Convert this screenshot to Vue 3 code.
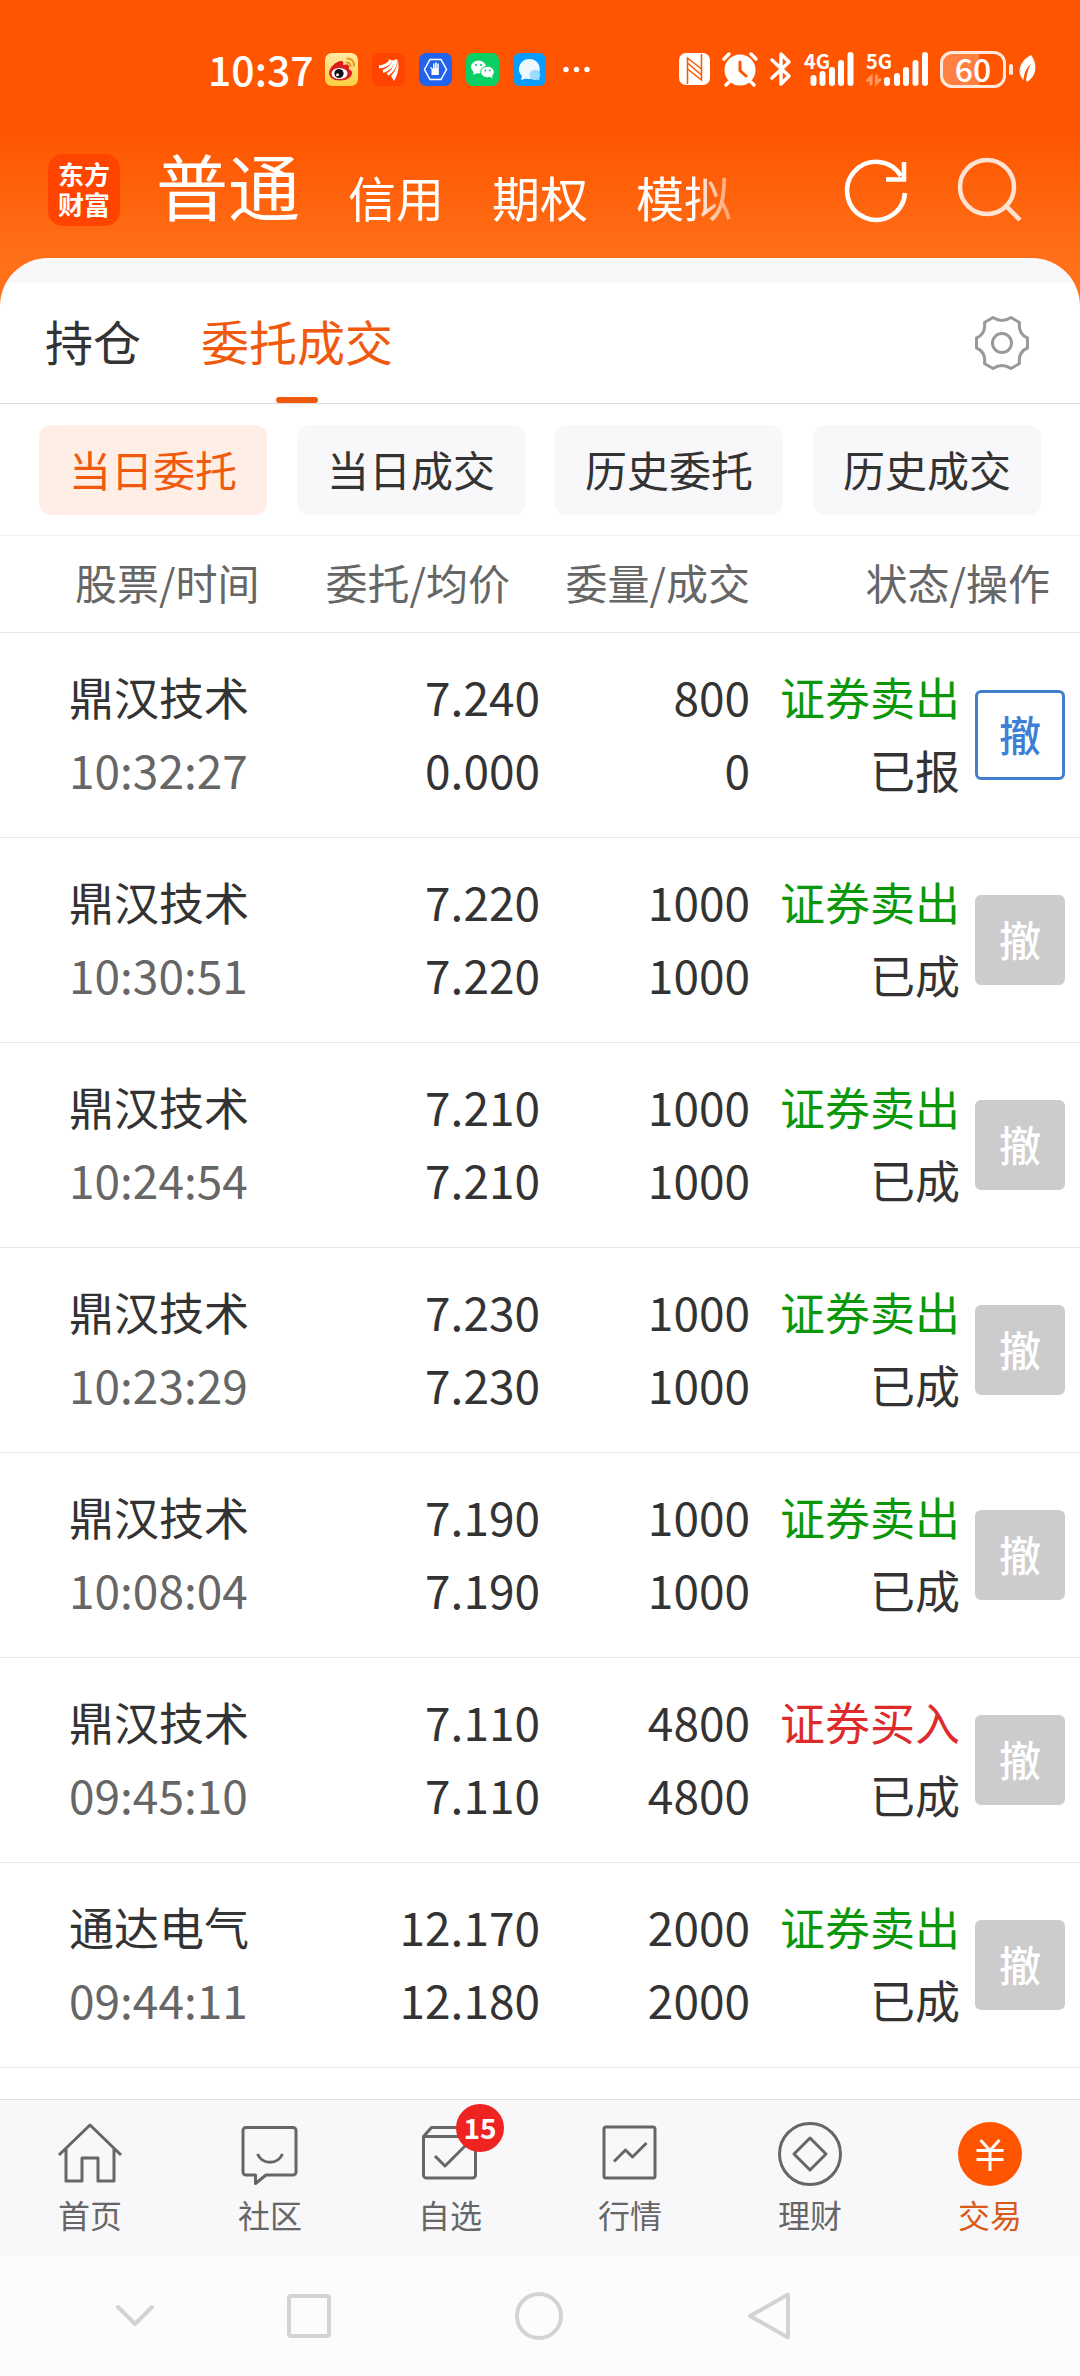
<template>
  <div class="app">
    <header class="header">
      <!-- 系统状态栏 -->
      <div class="status-bar">
        <span class="clock">10:37</span>
        <div class="notices">
          <svg viewBox="0 0 33 33" class="notice">
            <defs>
              <linearGradient id="weiboBg" x1="0" y1="0" x2="0" y2="1">
                <stop offset="0" stop-color="#ffe9a8" />
                <stop offset="1" stop-color="#ffcf3d" />
              </linearGradient>
            </defs>
            <rect width="33" height="33" rx="7" fill="url(#weiboBg)" />
            <path
              d="M4 20c0-5 7-12 12-12 2 0 3 1 2 4 3-1 6-1 6 1.500 0 1-.5 2 .5 3 2 1 2.500 2 2.500 3.500 0 4-5 7.500-12 7.500S4 24 4 20z"
              fill="#d81e1e" />
            <ellipse cx="14.500" cy="20.500" rx="8" ry="5.500" fill="#fff" />
            <circle cx="14" cy="20.500" r="4.600" fill="#111" />
            <circle cx="12.500" cy="21.800" r="1.500" fill="#fff" />
            <path d="M21 9.500c3-.5 5 1.500 4.500 4.500M21.500 5.500c5-.5 8 3 7.500 8" fill="none" stroke="#e89a1c" stroke-width="2" />
          </svg>
          <svg viewBox="0 0 33 33" class="notice">
            <rect width="33" height="33" rx="7" fill="#ff4300" />
            <g fill="none" stroke="#fff" stroke-width="3">
              <path d="M7 14c6-.5 10-3 12-7" />
              <path d="M11 18.500c6-2 9-5 11-11" />
              <path d="M15.500 21.500c5-3 8-8 8.500-15" />
            </g>
            <path d="M26 7c1.500 9-.5 15-4 21l-3-5c4-4 6-9 7-16z" fill="#fff" />
          </svg>
          <svg viewBox="0 0 33 33" class="notice">
            <rect width="33" height="33" rx="7" fill="#2263ee" />
            <path d="M11 6.500h11l5.500 10-5.500 10H11l-5.500-10z" fill="none" stroke="#fff" stroke-width="1.500" />
            <path
              d="M12.500 22V16.500l-1.500-2 1-.5 2 2v-5.500h1.500V15h.6v-5.500h1.600V15h.6v-4.500h1.500V22z"
              fill="#fff" />
          </svg>
          <svg viewBox="0 0 33 33" class="notice">
            <rect width="33" height="33" rx="7" fill="#09cf64" />
            <ellipse cx="12.500" cy="14" rx="7.500" ry="6.500" fill="#fff" />
            <path d="M8 18l-1 4 4-2z" fill="#fff" />
            <ellipse cx="21.500" cy="19" rx="6.800" ry="5.800" fill="#fff" stroke="#09cf64" />
            <path d="M23 23l3.500 2.500-.5-4z" fill="#fff" />
            <g fill="#09cf64">
              <circle cx="10" cy="12" r="1.100" />
              <circle cx="15" cy="12" r="1.100" />
              <circle cx="19.300" cy="17.500" r="1" />
              <circle cx="23.700" cy="17.500" r="1" />
            </g>
          </svg>
          <svg viewBox="0 0 33 33" class="notice">
            <rect width="33" height="33" rx="7" fill="#0a9bff" />
            <path d="M16 6a10.500 10 0 1 1-3 19.500L8 27l1-4A10.500 10 0 0 1 16 6z" fill="#eef9ff" />
            <path d="M21 17a5 5 0 0 1 5 8l.5 2.500-3-1A5 5 0 1 1 21 17z" fill="#9bdcff" />
          </svg>
          <svg viewBox="0 0 33 33" class="notice">
            <g fill="#fff">
              <circle cx="6" cy="16.500" r="2.700" />
              <circle cx="16.500" cy="16.500" r="2.700" />
              <circle cx="27" cy="16.500" r="2.700" />
            </g>
          </svg>
        </div>
        <div class="signals">
          <svg width="31" height="36" viewBox="0 0 31 36">
            <rect y="2" width="31" height="32" rx="7" fill="#fff" />
            <path d="M8.500 33V7l14 11" fill="none" stroke="#ff5500" stroke-width="1.500" />
            <path d="M22.500 3v26l-14-11M8.500 12l14 12" fill="none" stroke="#ff5500" stroke-width="1.500" />
          </svg>
          <svg width="36" height="36" viewBox="0 0 36 36" fill="none" stroke="#fff" stroke-width="3.500" stroke-linecap="round">
            <circle cx="18" cy="19" r="14.500" fill="#fff" stroke-width="2" />
            <path d="M2 8l5-5M34 8l-5-5M7 31l-3 3M29 31l3 3" />
            <path d="M18 11v8.500l6 5.500" stroke="#ff5500" stroke-width="3" />
          </svg>
          <svg width="22" height="36" viewBox="0 0 22 36">
            <path
              d="M2 9l17 16-8 8V3l8 8L2 27"
              fill="none"
              stroke="#fff"
              stroke-width="3.500"
              stroke-linecap="round"
              stroke-linejoin="round" />
          </svg>
          <svg width="50" height="36" viewBox="0 0 50 36" class="net">
            <text x="0" y="18">4G</text>
            <path d="M9.500 27v5M18.500 23v9M28 19v13M37 12v20M46.500 4v28" />
          </svg>
          <svg width="62" height="36" viewBox="0 0 62 36" class="net">
            <text x="0" y="18">5G</text>
            <path d="M5 33v-7l-3.500 3.500M10.500 25v7l3.500-3.500" class="arrows" />
            <path d="M21 29v3M31 25v7M40 19v13M49.500 12v20M59 4v28" />
          </svg>
          <div class="power">
            <span class="battery">60</span>
            <span class="battery-cap"></span>
            <svg width="20" height="30" viewBox="0 0 20 30">
              <path d="M13 1c6 8 7 20-4 27l-1-2C9 20 10 15 13 10 8 14 6 20 5.500 26-2 18 2 7 13 1z" fill="#fff" />
            </svg>
          </div>
        </div>
      </div>

      <!-- 账户类型 -->
      <div class="app-bar">
        <a href="#" class="logo">东方<br />财富</a>
        <nav class="accounts">
          <a v-for="name in accounts" :key="name" href="#" :class="{current: name === account}" @click.prevent="account = name">{{
            name
          }}</a>
        </nav>
        <button class="icon-btn" aria-label="刷新">
          <svg viewBox="0 0 64 64" fill="none" stroke="#fff" stroke-width="4.500">
            <path d="M61 35A29 29 0 1 1 57 18" />
            <path d="M60 4v17.500H42" />
          </svg>
        </button>
        <button class="icon-btn" aria-label="搜索">
          <svg viewBox="0 0 64 64" fill="none" stroke="#ffe3d2" stroke-width="4.500">
            <circle cx="31" cy="29" r="27" />
            <path d="M50 48l14 14" />
          </svg>
        </button>
      </div>
    </header>

    <main class="sheet">
      <div class="tabs">
        <button
          v-for="name in tabs"
          :key="name"
          class="tab"
          :class="{active: name === tab}"
          @click="tab = name">
          {{ name }}
        </button>
        <button class="setting" aria-label="设置">
          <svg viewBox="0 0 54 54" fill="none" stroke="#999" stroke-width="3" stroke-linejoin="round">
            <path
              d="M18 1.500Q27 7.500 36 1.500L44.500 6.500Q43 18 52.500 22V32Q43 36 44.500 47.500L36 52.500Q27 46.500 18 52.500L9.500 47.500Q11 36 1.500 32V22Q11 18 9.500 6.500Z" />
            <circle cx="27" cy="27" r="9.500" />
          </svg>
        </button>
      </div>

      <div class="filters">
        <button
          v-for="name in filters"
          :key="name"
          class="filter"
          :class="{active: name === filter}"
          @click="filter = name">
          {{ name }}
        </button>
      </div>

      <table class="orders">
        <colgroup>
          <col class="col-name" />
          <col class="col-price" />
          <col />
          <col />
          <col class="col-action" />
        </colgroup>
        <thead>
          <tr>
            <th class="name-head">股票/时间</th>
            <th class="price-head">委托/均价</th>
            <th>委量/成交</th>
            <th colspan="2" class="state-head">状态/操作</th>
          </tr>
        </thead>
        <tbody>
          <tr v-for="order in orders" :key="order.time">
            <td class="stock">
              <div>{{ order.name }}</div>
              <div class="num time">{{ order.time }}</div>
            </td>
            <td class="num">
              <div>{{ order.price }}</div>
              <div>{{ order.avg }}</div>
            </td>
            <td class="num">
              <div>{{ order.amount }}</div>
              <div>{{ order.done }}</div>
            </td>
            <td>
              <div :class="order.side">{{ order.side === "buy" ? "证券买入" : "证券卖出" }}</div>
              <div>{{ order.state }}</div>
            </td>
            <td class="action">
              <button class="cancel" :disabled="order.state !== '已报'">撤</button>
            </td>
          </tr>
        </tbody>
      </table>
    </main>

    <!-- 底部导航 -->
    <nav class="bottom-nav">
      <a v-for="item in menus" :key="item.name" href="#" class="menu" :class="{active: item.name === '交易'}">
        <span class="menu-icon">
          <svg viewBox="0 0 64 64" v-html="item.icon"></svg>
          <span v-if="item.badge" class="badge">{{ item.badge }}</span>
        </span>
        <span class="menu-name">{{ item.name }}</span>
      </a>
    </nav>

    <!-- 系统按键 -->
    <div class="system-keys">
      <button class="key hide" aria-label="收起">
        <svg viewBox="0 0 48 48"><path d="M7 15l17 17 17-17" /></svg>
      </button>
      <button class="key" aria-label="多任务">
        <svg viewBox="0 0 48 48"><rect x="4" y="4" width="40" height="40" rx="2" /></svg>
      </button>
      <button class="key" aria-label="主屏幕">
        <svg viewBox="0 0 48 48"><circle cx="24" cy="24" r="22" /></svg>
      </button>
      <button class="key" aria-label="返回">
        <svg viewBox="0 0 48 48"><path d="M43 2.500v43L5 24z" /></svg>
      </button>
    </div>
  </div>
</template>

<script setup>
import {ref} from "vue";

const accounts = ["普通", "信用", "期权", "模拟"];
const tabs = ["持仓", "委托成交"];
const filters = ["当日委托", "当日成交", "历史委托", "历史成交"];

const account = ref("普通");
const tab = ref("委托成交");
const filter = ref("当日委托");

const orders = ref([
  {name: "鼎汉技术", time: "10:32:27", price: "7.240", avg: "0.000", amount: 800, done: 0, side: "sell", state: "已报"},
  {name: "鼎汉技术", time: "10:30:51", price: "7.220", avg: "7.220", amount: 1000, done: 1000, side: "sell", state: "已成"},
  {name: "鼎汉技术", time: "10:24:54", price: "7.210", avg: "7.210", amount: 1000, done: 1000, side: "sell", state: "已成"},
  {name: "鼎汉技术", time: "10:23:29", price: "7.230", avg: "7.230", amount: 1000, done: 1000, side: "sell", state: "已成"},
  {name: "鼎汉技术", time: "10:08:04", price: "7.190", avg: "7.190", amount: 1000, done: 1000, side: "sell", state: "已成"},
  {name: "鼎汉技术", time: "09:45:10", price: "7.110", avg: "7.110", amount: 4800, done: 4800, side: "buy", state: "已成"},
  {name: "通达电气", time: "09:44:11", price: "12.170", avg: "12.180", amount: 2000, done: 2000, side: "sell", state: "已成"},
]);

// 底部菜单，图标画在 64x64 的格子里
const menus = [
  {name: "首页", icon: '<path d="M1 33L32 3l31 30M8 27v32h16V36h16v23h16V27"/>'},
  {
    name: "社区",
    icon: '<path d="M8 5.500h47a3 3 0 0 1 3 3V50a3 3 0 0 1-3 3H28l-10.500 8.500V53H8a3 3 0 0 1-3-3V8.500a3 3 0 0 1 3-3z"/><path d="M19.500 32c5 11 20 11 25 0"/>',
  },
  {
    name: "自选",
    badge: 15,
    icon: '<path d="M5.500 14.500h52V53a3 3 0 0 1-3 3h-46a3 3 0 0 1-3-3zl8-9h36l8 9"/><path d="M17 34l10 10 20-20"/>',
  },
  {
    name: "行情",
    icon: '<rect x="6" y="5" width="51" height="51" rx="2"/><path d="M16 39.500L27.500 28l7 7L48.500 21"/>',
  },
  {
    name: "理财",
    icon: '<circle cx="32" cy="32" r="30.500"/><path d="M32 16l16 16-16 16-16-16z"/>',
  },
  {
    name: "交易",
    icon: '<circle cx="32" cy="32" r="32" fill="#ff5500" stroke="none"/><path stroke="#fff" d="M22.500 18L32 28.500 41.500 18M32 28v21M18.500 28.500h27M18.500 37.500h27"/>',
  },
];
</script>

<style>
body {
  background: #fff;
}
</style>

<style scoped>
.app {
  min-height: 100vh;
  display: flex;
  flex-direction: column;
  background: linear-gradient(#ff5500 130px, #ff7019 260px);
  color: #333;
  font-family: "Noto Sans CJK SC", sans-serif;
}
button {
  font-family: inherit;
  padding: 0;
  border: none;
  background: none;
  color: inherit;
  cursor: pointer;
}
a {
  color: inherit;
  text-decoration: none;
}
svg {
  display: block;
  overflow: visible;
}

/* 状态栏 */
.status-bar {
  display: flex;
  align-items: center;
  height: 138px;
  padding: 0 42px 0 208px;
  color: #fff;
}
.clock {
  padding-bottom: 2px;
  font-size: 41px;
  font-weight: 500;
  line-height: 48px;
}
.notices {
  display: flex;
  gap: 14px;
  margin-left: 11px;
}
.notice {
  width: 33px;
  height: 33px;
}
.signals {
  display: flex;
  align-items: center;
  gap: 12px;
  margin-left: auto;
}
.net path {
  fill: none;
  stroke: #fff;
  stroke-width: 6;
  stroke-linecap: round;
}
.net .arrows {
  stroke: #ff9a66;
  stroke-width: 3;
}
.net text {
  fill: #fff;
  font-size: 20px;
  font-weight: 700;
}
.power {
  display: flex;
  align-items: center;
}
.battery {
  box-sizing: border-box;
  width: 66px;
  height: 37px;
  border: 3px solid #ffe9dc;
  border-radius: 12px;
  background: linear-gradient(90deg, #ff8040 60%, transparent 60%);
  font-size: 32px;
  font-weight: 500;
  line-height: 28px;
  text-align: center;
}
.battery-cap {
  width: 4px;
  height: 11px;
  margin: 0 5px 0 3px;
  border-radius: 2px;
  background: #ffe9dc;
}

/* 账户栏 */
.app-bar {
  display: flex;
  align-items: center;
  padding: 4px 60px 20px 48px;
  color: #fff;
}
.logo {
  box-sizing: border-box;
  width: 72px;
  height: 72px;
  padding-top: 5px;
  border-radius: 15px;
  background: #ff4400;
  font-size: 26px;
  font-weight: 700;
  line-height: 30px;
  text-align: center;
}
.accounts {
  flex: 1;
  display: flex;
  align-items: flex-end;
  gap: 48px;
  margin: 0 88px 0 36px;
  padding-bottom: 12px;
  font-size: 48px;
  line-height: 60px;
  white-space: nowrap;
  mask-image: linear-gradient(90deg, #000 calc(100% - 64px), transparent);
}
.accounts .current {
  font-size: 72px;
  line-height: 84px;
}
.icon-btn {
  width: 64px;
  height: 64px;
}
.icon-btn + .icon-btn {
  margin-left: 48px;
}

/* 内容面板 */
.sheet {
  flex: 1;
  padding-top: 25px;
  border-radius: 48px 48px 0 0;
  background: linear-gradient(#f8f8fb 25px, #fff 25px);
}
.tabs {
  display: flex;
  align-items: center;
  gap: 60px;
  height: 120px;
  padding: 0 51px 0 45px;
  border-bottom: 1px solid #ddd;
}
.tab {
  position: relative;
  height: 120px;
  padding-bottom: 6px;
  font-size: 48px;
}
.tab.active {
  color: #f05a0f;
}
.tab.active::after {
  content: "";
  position: absolute;
  left: 50%;
  bottom: 0;
  width: 42px;
  height: 6px;
  margin-left: -21px;
  border-radius: 3px;
  background: #f05a0f;
}
.setting {
  width: 54px;
  height: 54px;
  margin-left: auto;
}
.filters {
  display: flex;
  gap: 30px;
  padding: 21px 39px 20px;
  border-bottom: 1px solid #f2f2f2;
}
.filter {
  flex: 1;
  height: 90px;
  padding-bottom: 4px;
  border-radius: 12px;
  background: #f8f8fb;
  font-size: 42px;
}
.filter.active {
  background: #ffeee6;
  color: #f05a0f;
}

/* 委托列表 */
.orders {
  width: 100%;
  table-layout: fixed;
  border-spacing: 0;
}
.col-name {
  width: 26%;
}
.col-price {
  width: 24%;
}
.col-action {
  width: 120px;
}
th {
  padding: 22px 0 26px;
  border-bottom: 1px solid #e8e8e8;
  color: #666;
  font-size: 42px;
  font-weight: 400;
  line-height: 48px;
  text-align: right;
  white-space: nowrap;
}
.name-head {
  padding-left: 75px;
  text-align: left;
}
.price-head,
.state-head {
  padding-right: 30px;
}
td {
  padding: 27px 0 31px;
  border-bottom: 1px solid #e8e8e8;
  font-size: 45px;
  line-height: 73px;
  text-align: right;
  white-space: nowrap;
}
.stock {
  padding-left: 69px;
  text-align: left;
}
.num {
  font-size: 46px;
}
.time {
  color: #666;
}
.sell {
  color: #0a980a;
}
.buy {
  color: #dd2b2b;
}
.action {
  padding: 0 15px;
}
.cancel {
  display: block;
  width: 90px;
  height: 90px;
  padding-bottom: 4px;
  border: 3px solid #4080cc;
  border-radius: 6px;
  color: #3c7fd4;
  font-size: 42px;
  font-weight: 500;
}
.cancel:disabled {
  border-color: #ccc;
  background: #ccc;
  color: #fff;
  cursor: default;
}

/* 底部导航 */
.bottom-nav {
  display: flex;
  padding: 22px 0;
  border-top: 1px solid #ddd;
  background: #f8f8fb;
}
.menu {
  flex: 1;
  display: flex;
  flex-direction: column;
  align-items: center;
  gap: 8px;
  color: #666;
  font-size: 32px;
  line-height: 40px;
}
.menu.active {
  color: #d95a1a;
}
.menu-icon {
  position: relative;
  width: 64px;
  height: 64px;
}
.menu-icon svg {
  fill: none;
  stroke: #666;
  stroke-width: 3;
  stroke-linejoin: round;
}
.badge {
  position: absolute;
  left: 38px;
  top: -18px;
  width: 48px;
  height: 48px;
  border-radius: 50%;
  background: #f02323;
  color: #fff;
  font-size: 28px;
  font-weight: 700;
  line-height: 46px;
  text-align: center;
}

/* 系统按键 */
.system-keys {
  display: flex;
  align-items: center;
  gap: 182px;
  height: 120px;
  padding-left: 111px;
  background: #fcfcfc;
}
.key {
  width: 48px;
  height: 48px;
}
.key.hide {
  margin-right: -56px;
}
.key svg {
  fill: none;
  stroke: #d3d3d3;
  stroke-width: 4;
  stroke-linecap: round;
  stroke-linejoin: round;
}
</style>
